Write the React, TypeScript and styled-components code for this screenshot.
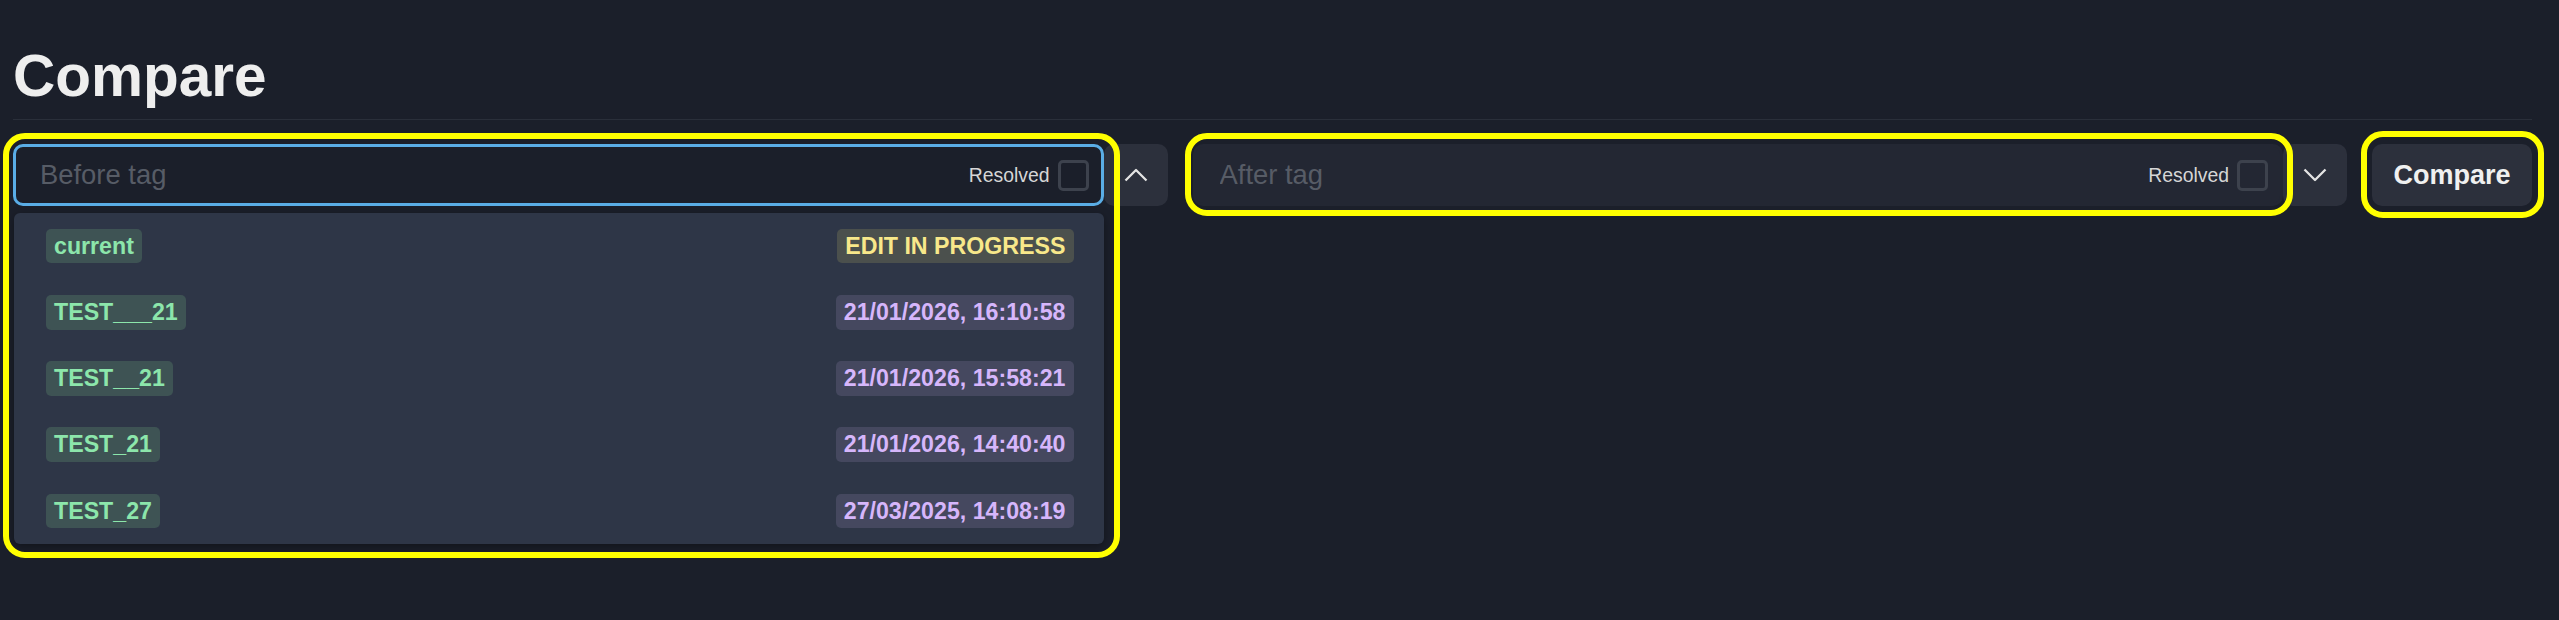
import React from "react";
import styled, { createGlobalStyle } from "styled-components";

type Tone = "green" | "purple" | "yellow";

const tones: Record<Tone, { bg: string; fg: string }> = {
  green: { bg: "#3e5354", fg: "#8ce6ab" },
  purple: { bg: "#45485f", fg: "#d6b6fb" },
  yellow: { bg: "#4b504d", fg: "#f8e88a" },
};

const GlobalStyle = createGlobalStyle`
  html, body {
    margin: 0;
    padding: 0;
    background: #1b1f2a;
  }
  body {
    font-family: "Liberation Sans", Arial, sans-serif;
    color: #eeeeee;
  }
  * {
    box-sizing: border-box;
  }
`;

const Page = styled.main`
  min-height: 620px;
  padding: 43px 27px 0 13px;
`;

const Header = styled.header`
  padding-bottom: 10px;
  border-bottom: 1px solid #2a2f3a;
`;

const Title = styled.h1`
  margin: 0;
  font-size: 58.5px;
  line-height: 66px;
  font-weight: 700;
  color: #eeeeee;
`;

const Toolbar = styled.div`
  display: flex;
  align-items: flex-start;
  gap: 25px;
  margin-top: 24px;
`;

const Combo = styled.div`
  flex: 1;
  display: flex;
  align-items: flex-start;
`;

const Field = styled.div`
  position: relative;
  flex: 1;
  display: flex;
  flex-direction: column;
  gap: 7px;
`;

const InputBox = styled.div<{ $focused?: boolean }>`
  height: 62px;
  display: flex;
  align-items: center;
  padding: 0 12px 0 24px;
  border: 3px solid ${(p) => (p.$focused ? "#5aade6" : "#232733")};
  border-radius: 10px;
  background: ${(p) => (p.$focused ? "#1b1f2a" : "#232733")};
`;

const TagInput = styled.input`
  flex: 1;
  min-width: 0;
  padding: 0;
  border: 0;
  outline: 0;
  background: transparent;
  font-family: inherit;
  font-size: 27.4px;
  color: #eeeeee;

  &::placeholder {
    color: #575c66;
  }
`;

const Resolved = styled.label`
  display: flex;
  align-items: center;
  gap: 8px;
  font-size: 19.4px;
  color: #d6d6d6;
`;

const Check = styled.input`
  appearance: none;
  margin: 0;
  width: 31px;
  height: 31px;
  border: 3px solid #3d424d;
  border-radius: 5px;
  background: transparent;
`;

const ChevronButton = styled.button`
  width: 64px;
  height: 62px;
  flex: none;
  display: flex;
  align-items: center;
  justify-content: center;
  padding: 0;
  border: 0;
  border-radius: 10px;
  background: #2c303c;
  color: #e4e4e4;
`;

const CompareButton = styled.button`
  position: relative;
  width: 160px;
  height: 62px;
  flex: none;
  padding: 0;
  border: 0;
  border-radius: 10px;
  background: #2c303c;
  color: #f0f0f0;
  font-family: inherit;
  font-size: 27px;
  font-weight: 700;
`;

const Menu = styled.ul`
  margin: 0 0 0 1px;
  padding: 0;
  list-style: none;
  border-radius: 6px;
  background: #2e3647;
  box-shadow: 0 3px 10px rgba(0, 0, 0, 0.35);
`;

const MenuRow = styled.li`
  height: 66.2px;
  display: flex;
  align-items: center;
  justify-content: space-between;
  padding: 0 30px 0 32px;
`;

const Badge = styled.span<{ $tone: Tone }>`
  padding: 4px 8px;
  border-radius: 5px;
  font-size: 23.2px;
  line-height: 26.5px;
  font-weight: 700;
  background: ${(p) => tones[p.$tone].bg};
  color: ${(p) => tones[p.$tone].fg};
`;

const Highlight = styled.div<{ $t: number; $r: number; $b: number; $l: number }>`
  position: absolute;
  top: ${(p) => -p.$t}px;
  right: ${(p) => -p.$r}px;
  bottom: ${(p) => -p.$b}px;
  left: ${(p) => -p.$l}px;
  z-index: 2;
  border: 6px solid #ffff00;
  border-radius: 22px;
  pointer-events: none;
`;

const Chevron = ({ up }: { up?: boolean }) => (
  <svg width="24" height="14" viewBox="0 0 24 14" fill="none">
    <polyline
      points={up ? "1.5,12.5 12,2 22.5,12.5" : "1.5,1.5 12,12 22.5,1.5"}
      stroke="currentColor"
      strokeWidth="2.3"
      strokeLinejoin="round"
    />
  </svg>
);

const tags = [
  { name: "current", when: "EDIT IN PROGRESS", tone: "yellow" as Tone },
  { name: "TEST___21", when: "21/01/2026, 16:10:58", tone: "purple" as Tone },
  { name: "TEST__21", when: "21/01/2026, 15:58:21", tone: "purple" as Tone },
  { name: "TEST_21", when: "21/01/2026, 14:40:40", tone: "purple" as Tone },
  { name: "TEST_27", when: "27/03/2025, 14:08:19", tone: "purple" as Tone },
];

export default function App() {
  return (
    <>
      <GlobalStyle />
      <Page>
        <Header>
          <Title>Compare</Title>
        </Header>
        <Toolbar>
          <Combo>
            <Field>
              <InputBox $focused>
                <TagInput placeholder="Before tag" />
                <Resolved>
                  Resolved
                  <Check type="checkbox" />
                </Resolved>
              </InputBox>
              <Menu>
                {tags.map((t) => (
                  <MenuRow key={t.name}>
                    <Badge $tone="green">{t.name}</Badge>
                    <Badge $tone={t.tone}>{t.when}</Badge>
                  </MenuRow>
                ))}
              </Menu>
              <Highlight $t={11} $r={16} $b={14} $l={10} />
            </Field>
            <ChevronButton>
              <Chevron up />
            </ChevronButton>
          </Combo>
          <Combo>
            <Field>
              <InputBox>
                <TagInput placeholder="After tag" />
                <Resolved>
                  Resolved
                  <Check type="checkbox" />
                </Resolved>
              </InputBox>
              <Highlight $t={11} $r={10} $b={10} $l={8} />
            </Field>
            <ChevronButton>
              <Chevron />
            </ChevronButton>
          </Combo>
          <CompareButton>
            Compare
            <Highlight $t={13} $r={12} $b={12} $l={11} />
          </CompareButton>
        </Toolbar>
      </Page>
    </>
  );
}
